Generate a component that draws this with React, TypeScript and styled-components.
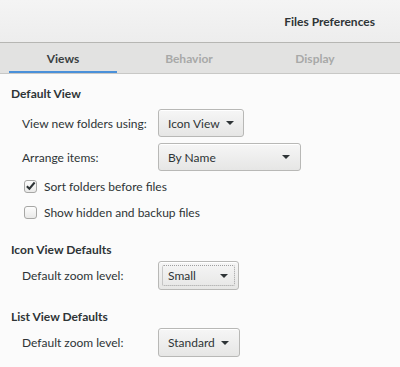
import React from "react";
import styled, { createGlobalStyle } from "styled-components";

const Global = createGlobalStyle`
  html, body { margin: 0; padding: 0; background: #fbfbfb; }
  body { font-family: Lato, "Noto Sans", sans-serif; font-size: 12px; color: #2e3436; }
  * { box-sizing: border-box; }
`;

const Window = styled.div`
  width: 400px;
  height: 367px;
  background: #fbfbfb;
  display: flex;
  flex-direction: column;
  overflow: hidden;
`;

const HeaderBar = styled.div`
  height: 43px;
  background: linear-gradient(#f4f4f4, #ededed);
  border-bottom: 1px solid #b6b6b3;
  display: flex;
  align-items: center;
  justify-content: flex-end;
  padding-right: 25px;
`;

const Title = styled.div`
  font-weight: 700;
  font-size: 12px;
  color: #2e3436;
`;

const TabBar = styled.div`
  height: 31px;
  background: #e2e2e1;
  border-bottom: 1px solid #c8c8c6;
  display: grid;
  grid-template-columns: 126px 126px 126px;
`;

const Tab = styled.div<{ $active?: boolean }>`
  display: flex;
  align-items: center;
  justify-content: center;
  font-weight: 700;
  font-size: 12px;
  color: ${(p) => (p.$active ? "#3a3f41" : "#a8a9a8")};
  margin: ${(p) => (p.$active ? "0 9px" : "0")};
  border-bottom: 2px solid ${(p) => (p.$active ? "#4a90d9" : "transparent")};
  padding-top: 2px;
`;

const Content = styled.div`
  padding: 12px 11px 0 11px;
  display: flex;
  flex-direction: column;
`;

const SectionTitle = styled.div<{ $mt?: number }>`
  font-weight: 700;
  font-size: 12px;
  height: 16px;
  line-height: 16px;
  margin-top: ${(p) => p.$mt ?? 0}px;
`;

const Row = styled.div<{ $mt?: number }>`
  display: grid;
  grid-template-columns: 136px auto;
  align-items: center;
  padding-left: 11px;
  margin-top: ${(p) => p.$mt ?? 0}px;
  height: 28px;
`;

const Label = styled.div`
  font-size: 12px;
  color: #2e3436;
  white-space: nowrap;
`;

const Combo = styled.div<{ $w: number; $h?: number; $focus?: boolean }>`
  width: ${(p) => p.$w}px;
  height: ${(p) => p.$h ?? 28}px;
  border: 1px solid #b8b8b6;
  border-radius: 3px;
  background: linear-gradient(#f6f6f6, #e6e6e5);
  box-shadow: inset 0 1px #ffffff;
  display: flex;
  align-items: center;
  justify-content: space-between;
  padding: 0 10px 0 9px;
  font-size: 12px;
  white-space: nowrap;
  color: #2e3436;
  position: relative;
  ${(p) =>
    p.$focus
      ? `&::after { content: ""; position: absolute; inset: 3px; border: 1px dotted #a0a0a0; border-radius: 2px; }`
      : ""}
`;

const Arrow = styled.span`
  width: 0;
  height: 0;
  border-left: 4px solid transparent;
  border-right: 4px solid transparent;
  border-top: 4px solid #2e3436;
  margin-left: 6px;
`;

const CheckRow = styled.div<{ $mt?: number }>`
  display: flex;
  align-items: center;
  gap: 7px;
  padding-left: 13px;
  margin-top: ${(p) => p.$mt ?? 0}px;
  height: 14px;
`;

const Box = styled.span`
  width: 13px;
  height: 13px;
  border: 1px solid #a7a7a5;
  border-radius: 3px;
  background: linear-gradient(#fdfdfd, #e9e9e8);
  display: flex;
  align-items: center;
  justify-content: center;
`;

function Check({ checked, label, mt }: { checked?: boolean; label: string; mt?: number }) {
  return (
    <CheckRow $mt={mt}>
      <Box>
        {checked && (
          <svg width="12" height="12" viewBox="0 0 12 12">
            <path d="M2 6.2 L4.8 9 L10.5 2.2" fill="none" stroke="#2e3436" strokeWidth="2.2" />
          </svg>
        )}
      </Box>
      <Label>{label}</Label>
    </CheckRow>
  );
}

export default function App() {
  return (
    <Window>
      <Global />
      <HeaderBar>
        <Title>Files Preferences</Title>
      </HeaderBar>
      <TabBar>
        <Tab $active>Views</Tab>
        <Tab>Behavior</Tab>
        <Tab>Display</Tab>
      </TabBar>
      <Content>
        <SectionTitle>Default View</SectionTitle>
        <Row $mt={7}>
          <Label>View new folders using:</Label>
          <Combo $w={86}>
            Icon View <Arrow />
          </Combo>
        </Row>
        <Row $mt={6}>
          <Label>Arrange items:</Label>
          <Combo $w={143}>
            By Name <Arrow />
          </Combo>
        </Row>
        <Check checked label="Sort folders before files" mt={8} />
        <Check label="Show hidden and backup files" mt={12} />
        <SectionTitle $mt={23}>Icon View Defaults</SectionTitle>
        <Row $mt={3}>
          <Label>Default zoom level:</Label>
          <Combo $w={81} $h={29} $focus>
            Small <Arrow />
          </Combo>
        </Row>
        <SectionTitle $mt={20}>List View Defaults</SectionTitle>
        <Row $mt={3}>
          <Label>Default zoom level:</Label>
          <Combo $w={82} $h={29}>
            Standard <Arrow />
          </Combo>
        </Row>
      </Content>
    </Window>
  );
}
